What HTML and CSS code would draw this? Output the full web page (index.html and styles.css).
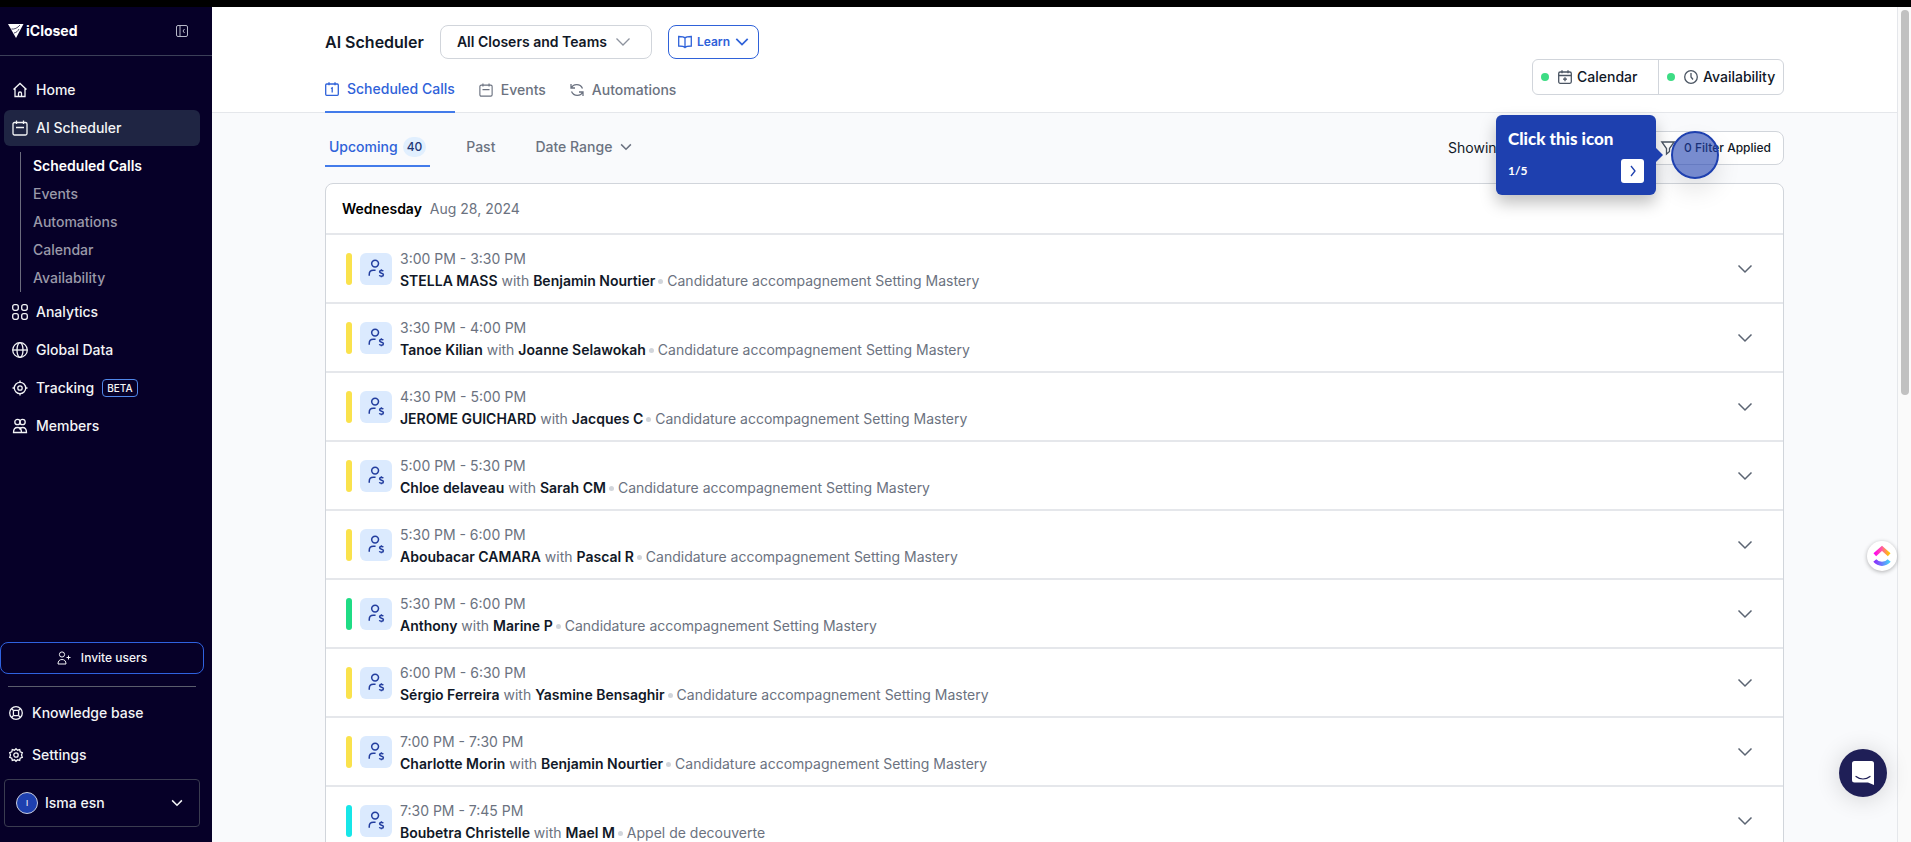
FILE: index.html
```html
<!DOCTYPE html>
<html lang="en">
<head>
    <meta charset="UTF-8">
    <meta name="viewport" content="width=device-width, initial-scale=1.0">
    <title>iClosed - AI Scheduler</title>
    <link rel="stylesheet" href="styles.css">
</head>
<body>
    <!-- shared icons -->
    <svg class="sprite" xmlns="http://www.w3.org/2000/svg">
        <symbol id="i-chevron" viewBox="0 0 16 16"><path d="M1.500 4.500L8 11l6.500-6.500"/></symbol>
        <symbol id="i-calendar" viewBox="0 0 16 16"><rect x="1" y="2.500" width="14" height="12.500" rx="1.500"/><path d="M4.500 .5v3.500M11.500 .5v3.500M4 7.500h8"/></symbol>
        <symbol id="i-caller" viewBox="0 0 20 22"><circle cx="9" cy="5" r="3.800"/><path d="M2.500 18.500v-1.500c0-3 2-4.500 4.500-4.500h2.500"/><path d="M18 13.500c-.5-1.200-4-1.400-4 .6 0 2.200 4.200 1 4.200 3.200s-3.900 2-4.400.5M16 11.300v1.300M16 18.800v1.300"/></symbol>
    </svg>

    <div class="topbar"></div>
    <div class="app">
        <aside class="sidebar">
            <div class="brand">
                <svg class="brand-mark" viewBox="0 0 16 14"><path d="M0 0h15.500L8 14z" fill="#fff"/><path d="M3.500 5c3 .5 6-1 8.500-4M6 9c2.500-.5 4-2 5-4" stroke="#060028" stroke-width=".7"/></svg>
                <span class="brand-name">iClosed</span>
                <button class="collapse" aria-label="Collapse sidebar">
                    <svg viewBox="0 0 12 12"><rect x=".5" y=".5" width="11" height="11" rx="1.500"/><path d="M4 .5v11M8.500 4L7 6l1.500 2"/></svg>
                </button>
            </div>

            <nav class="menu">
                <a href="#" class="menu-item">
                    <svg viewBox="0 0 16 16"><path d="M1.500 7.500L8 1.500l6.500 6M3 6.500v8h10v-8M6.500 14.500v-3a1.500 1.500 0 0 1 3 0v3"/></svg>
                    Home
                </a>
                <a href="#" class="menu-item active">
                    <svg><use href="#i-calendar"/></svg>
                    AI Scheduler
                </a>
                <div class="submenu">
                    <a href="#" class="current">Scheduled Calls</a>
                    <a href="#">Events</a>
                    <a href="#">Automations</a>
                    <a href="#">Calendar</a>
                    <a href="#">Availability</a>
                </div>
                <a href="#" class="menu-item">
                    <svg viewBox="0 0 16 16"><rect x=".7" y=".7" width="5.600" height="5.600" rx="2"/><rect x="9.700" y=".7" width="5.600" height="5.600" rx="2"/><rect x=".7" y="9.700" width="5.600" height="5.600" rx="2"/><rect x="9.700" y="9.700" width="5.600" height="5.600" rx="2"/></svg>
                    Analytics
                </a>
                <a href="#" class="menu-item">
                    <svg viewBox="0 0 16 16"><circle cx="8" cy="8" r="7.300"/><ellipse cx="8" cy="8" rx="3" ry="7.300"/><path d="M.7 8h14.600"/></svg>
                    Global Data
                </a>
                <a href="#" class="menu-item">
                    <svg viewBox="0 0 16 16"><circle cx="8" cy="8" r="5.700"/><circle cx="8" cy="8" r="2.200"/><path d="M8 .5v2M8 13.500v2M.5 8h2M13.500 8h2"/></svg>
                    Tracking
                    <span class="beta">BETA</span>
                </a>
                <a href="#" class="menu-item">
                    <svg viewBox="0 0 16 16"><circle cx="5.500" cy="4" r="2.700"/><circle cx="10.500" cy="4" r="2.700"/><path d="M1.500 14.500c0-3.500 2-5 4-5s4 1.500 4 5zM9.500 14.500h5c0-3.500-2-5-4-5-1.500 0-2.500 1-3 2"/></svg>
                    Members
                </a>
            </nav>

            <div class="sidebar-bottom">
                <button class="invite">
                    <svg viewBox="0 0 14 14"><circle cx="5" cy="3.500" r="2.600"/><path d="M1 13c0-3 1.500-4.500 4-4.500S9 10 9 13zM11.500 4.500v4M9.500 6.500h4"/></svg>
                    Invite users
                </button>
                <div class="divider"></div>
                <a href="#" class="bottom-item">
                    <svg viewBox="0 0 14 14"><circle cx="7" cy="7" r="6.300"/><rect x="4.400" y="4.400" width="5.200" height="5.200" rx="1"/><path d="M2.500 2.500l2 2M11.500 2.500l-2 2M2.500 11.500l2-2M11.500 11.500l-2-2"/></svg>
                    Knowledge base
                </a>
                <a href="#" class="bottom-item">
                    <svg viewBox="0 0 14 14"><path d="M7 .7l1.500 1.500 2.200-.6.500 2.200 2.100.8-.8 2.400.8 2.400-2.100.8-.5 2.200-2.200-.6L7 13.300l-1.500-1.500-2.200.6-.5-2.200-2.100-.8L1.500 7 .7 4.600l2.100-.8.500-2.200 2.200.6z"/><circle cx="7" cy="7" r="2.200"/></svg>
                    Settings
                </a>
                <button class="account">
                    <span class="avatar">I</span>
                    Isma esn
                    <svg class="account-chevron"><use href="#i-chevron"/></svg>
                </button>
            </div>
        </aside>

        <main class="main">
            <header class="header">
                <div class="wrap">
                    <div class="title-row">
                        <h1>AI Scheduler</h1>
                        <button class="team-select">All Closers and Teams <svg><use href="#i-chevron"/></svg></button>
                        <button class="learn">
                            <svg viewBox="0 0 14 14"><path d="M7 3C6 1.700 4 1.500.7 1.500v9.500C4 11 6 11.200 7 12.500c1-1.300 3-1.500 6.300-1.500V1.500C10 1.500 8 1.700 7 3zM7 3v9.500"/></svg>
                            Learn
                            <svg class="learn-chevron"><use href="#i-chevron"/></svg>
                        </button>
                    </div>
                    <div class="tabs-row">
                        <nav class="tabs">
                            <a href="#" class="tab active">
                                <svg viewBox="0 0 14 14"><rect x=".7" y="2" width="12.600" height="11.300" rx="1"/><path d="M4 .3v3M10 .3v3M6 6.500l1.200-.7v4.700"/></svg>
                                Scheduled Calls
                            </a>
                            <a href="#" class="tab">
                                <svg><use href="#i-calendar"/></svg>
                                Events
                            </a>
                            <a href="#" class="tab">
                                <svg viewBox="0 0 14 14"><path d="M1 1v4h4M1.300 5C3 1 10 0 12.500 5.500M13 13V9H9M12.700 9C11 13 4 14 1.500 8.500"/></svg>
                                Automations
                            </a>
                        </nav>
                        <div class="shortcuts">
                            <button><span class="dot"></span><svg viewBox="0 0 14 14"><rect x=".7" y="2" width="12.600" height="11.300" rx="1.500"/><path d="M4 .3v3M10 .3v3M.7 5.500h12.600M7 7.200v4M5 9.200h4"/></svg>Calendar</button>
                            <button><span class="dot"></span><svg viewBox="0 0 14 14"><circle cx="7" cy="7" r="6.300"/><path d="M7 3v4l2 2.500"/></svg>Availability</button>
                        </div>
                    </div>
                </div>
            </header>

            <div class="wrap">
                <div class="filters">
                    <nav class="ranges">
                        <a href="#" class="range active">Upcoming <span class="count">40</span></a>
                        <a href="#" class="range">Past</a>
                        <a href="#" class="range">Date Range <svg><use href="#i-chevron"/></svg></a>
                    </nav>
                    <div class="filter-side">
                        <span class="showing">Showing</span>
                        <button class="filter-btn">
                            <svg viewBox="0 0 14 14"><path d="M.8 1h12.400L8.500 7.500v3L5.500 13V7.500z"/></svg>
                            0 Filter Applied
                        </button>
                        <div class="tour">
                            <strong class="tour-title">Click this icon</strong>
                            <div class="tour-foot">
                                <span>1/5</span>
                                <button aria-label="Next step"><svg viewBox="0 0 16 16"><path d="M6 3l4 5-4 5"/></svg></button>
                            </div>
                        </div>
                        <div class="hotspot"></div>
                    </div>
                </div>

                <section class="calls">
                    <div class="day"><strong>Wednesday</strong> Aug 28, 2024</div>

                    <div class="call">
                        <span class="bar yellow"></span>
                        <span class="call-icon"><svg><use href="#i-caller"/></svg></span>
                        <div class="call-text">
                            <div>3:00 PM - 3:30 PM</div>
                            <div><b>STELLA MASS</b> with <b>Benjamin Nourtier</b><i class="sep"></i>Candidature accompagnement Setting Mastery</div>
                        </div>
                        <button class="expand" aria-label="Show details"><svg><use href="#i-chevron"/></svg></button>
                    </div>
                    <div class="call">
                        <span class="bar yellow"></span>
                        <span class="call-icon"><svg><use href="#i-caller"/></svg></span>
                        <div class="call-text">
                            <div>3:30 PM - 4:00 PM</div>
                            <div><b>Tanoe Kilian</b> with <b>Joanne Selawokah</b><i class="sep"></i>Candidature accompagnement Setting Mastery</div>
                        </div>
                        <button class="expand" aria-label="Show details"><svg><use href="#i-chevron"/></svg></button>
                    </div>
                    <div class="call">
                        <span class="bar yellow"></span>
                        <span class="call-icon"><svg><use href="#i-caller"/></svg></span>
                        <div class="call-text">
                            <div>4:30 PM - 5:00 PM</div>
                            <div><b>JEROME GUICHARD</b> with <b>Jacques C</b><i class="sep"></i>Candidature accompagnement Setting Mastery</div>
                        </div>
                        <button class="expand" aria-label="Show details"><svg><use href="#i-chevron"/></svg></button>
                    </div>
                    <div class="call">
                        <span class="bar yellow"></span>
                        <span class="call-icon"><svg><use href="#i-caller"/></svg></span>
                        <div class="call-text">
                            <div>5:00 PM - 5:30 PM</div>
                            <div><b>Chloe delaveau</b> with <b>Sarah CM</b><i class="sep"></i>Candidature accompagnement Setting Mastery</div>
                        </div>
                        <button class="expand" aria-label="Show details"><svg><use href="#i-chevron"/></svg></button>
                    </div>
                    <div class="call">
                        <span class="bar yellow"></span>
                        <span class="call-icon"><svg><use href="#i-caller"/></svg></span>
                        <div class="call-text">
                            <div>5:30 PM - 6:00 PM</div>
                            <div><b>Aboubacar CAMARA</b> with <b>Pascal R</b><i class="sep"></i>Candidature accompagnement Setting Mastery</div>
                        </div>
                        <button class="expand" aria-label="Show details"><svg><use href="#i-chevron"/></svg></button>
                    </div>
                    <div class="call">
                        <span class="bar green"></span>
                        <span class="call-icon"><svg><use href="#i-caller"/></svg></span>
                        <div class="call-text">
                            <div>5:30 PM - 6:00 PM</div>
                            <div><b>Anthony</b> with <b>Marine P</b><i class="sep"></i>Candidature accompagnement Setting Mastery</div>
                        </div>
                        <button class="expand" aria-label="Show details"><svg><use href="#i-chevron"/></svg></button>
                    </div>
                    <div class="call">
                        <span class="bar yellow"></span>
                        <span class="call-icon"><svg><use href="#i-caller"/></svg></span>
                        <div class="call-text">
                            <div>6:00 PM - 6:30 PM</div>
                            <div><b>Sérgio Ferreira</b> with <b>Yasmine Bensaghir</b><i class="sep"></i>Candidature accompagnement Setting Mastery</div>
                        </div>
                        <button class="expand" aria-label="Show details"><svg><use href="#i-chevron"/></svg></button>
                    </div>
                    <div class="call">
                        <span class="bar yellow"></span>
                        <span class="call-icon"><svg><use href="#i-caller"/></svg></span>
                        <div class="call-text">
                            <div>7:00 PM - 7:30 PM</div>
                            <div><b>Charlotte Morin</b> with <b>Benjamin Nourtier</b><i class="sep"></i>Candidature accompagnement Setting Mastery</div>
                        </div>
                        <button class="expand" aria-label="Show details"><svg><use href="#i-chevron"/></svg></button>
                    </div>
                    <div class="call">
                        <span class="bar cyan"></span>
                        <span class="call-icon"><svg><use href="#i-caller"/></svg></span>
                        <div class="call-text">
                            <div>7:30 PM - 7:45 PM</div>
                            <div><b>Boubetra Christelle</b> with <b>Mael M</b><i class="sep"></i>Appel de decouverte</div>
                        </div>
                        <button class="expand" aria-label="Show details"><svg><use href="#i-chevron"/></svg></button>
                    </div>
                </section>
            </div>
        </main>
        <div class="scrollbar"><div class="thumb"></div></div>
    </div>

    <button class="clickup" aria-label="ClickUp">
        <svg viewBox="0 0 20 24">
            <defs>
                <linearGradient id="cu-top"><stop offset="0" stop-color="#ff02f0"/><stop offset=".5" stop-color="#ff5f9e"/><stop offset="1" stop-color="#ffc800"/></linearGradient>
                <linearGradient id="cu-bottom"><stop offset="0" stop-color="#8930fd"/><stop offset="1" stop-color="#49ccf9"/></linearGradient>
            </defs>
            <path d="M2 10.500L10 3.500l8 7" stroke="url(#cu-top)" stroke-width="4.500"/>
            <path d="M2 17c4.500 5 11.500 5 16 0" stroke="url(#cu-bottom)" stroke-width="4.500"/>
        </svg>
    </button>
    <button class="chat" aria-label="Open chat">
        <svg viewBox="0 0 22 24"><path d="M2.500 0h17A2.500 2.500 0 0 1 22 2.500V24l-6-2.500H2.500A2.500 2.500 0 0 1 0 19V2.500A2.500 2.500 0 0 1 2.500 0z" fill="#fff"/><path d="M4 15.500c4 3.300 10 3.300 14 0" stroke="#1f1f57" stroke-width="1.200" stroke-linecap="round"/></svg>
    </button>
</body>
</html>
```
FILE: styles.css
```css
* {
    box-sizing: border-box;
}
body {
    margin: 0;
    height: 100vh;
    display: flex;
    flex-direction: column;
    overflow: hidden;
    font-family: Inter, "Liberation Sans", sans-serif;
    font-size: 14px;
    line-height: 20px;
    color: #111827;
    background: #f9fafc;
}
a {
    color: inherit;
    text-decoration: none;
}
button {
    font: inherit;
    color: inherit;
    background: none;
    border: none;
    padding: 0;
    cursor: pointer;
}
svg {
    width: 16px;
    height: 16px;
    flex: none;
    fill: none;
    stroke: currentColor;
    stroke-width: 1.3;
    overflow: visible;
}
.sprite {
    position: absolute;
    width: 0;
    height: 0;
}
.topbar {
    height: 7px;
    flex: none;
    background: #000;
}
.app {
    flex: 1;
    min-height: 0;
    display: flex;
}

/* sidebar */
.sidebar {
    width: 212px;
    flex: none;
    display: flex;
    flex-direction: column;
    background: #060028;
    color: #f3f4f6;
    font-weight: 500;
}
.brand {
    height: 49px;
    flex: none;
    display: flex;
    align-items: center;
    padding: 0 24px 0 8px;
    border-bottom: 1px solid #3b3f58;
}
.brand-mark {
    height: 14px;
    stroke: none;
}
.brand-name {
    margin-left: 2px;
    font-size: 14px;
    font-weight: 700;
    color: #fff;
}
.collapse {
    display: flex;
    margin-left: auto;
    color: #b6b8c8;
}
.collapse svg {
    width: 12px;
    height: 12px;
    stroke-width: 1;
}
.menu {
    padding: 14px 12px 0 4px;
}
.menu-item {
    display: flex;
    align-items: center;
    gap: 8px;
    height: 36px;
    margin: 2px 0;
    padding-left: 8px;
    border-radius: 6px;
}
.menu-item.active {
    background: #1f2543;
}
.submenu {
    margin: 6px 0 0 16px;
    padding-left: 12px;
    border-left: 1px solid #6b6b7d;
}
.submenu a {
    display: block;
    line-height: 28px;
    color: #9a99a9;
}
.submenu a.current {
    color: #fff;
    font-weight: 600;
}
.beta {
    padding: 0 4px;
    border: 1px solid #5087e8;
    border-radius: 4px;
    font-size: 10px;
    line-height: 16px;
}
.sidebar-bottom {
    margin-top: auto;
    padding: 0 8px 15px 0;
}
.invite {
    display: flex;
    align-items: center;
    justify-content: center;
    gap: 10px;
    width: 100%;
    height: 32px;
    border: 1px solid #2f62e0;
    border-radius: 8px;
    font-size: 12px;
}
.invite svg {
    width: 14px;
    height: 14px;
    stroke-width: 1;
}
.divider {
    height: 1px;
    margin: 12px 8px 5px;
    background: #5a5d6c;
}
.bottom-item {
    display: flex;
    align-items: center;
    gap: 9px;
    height: 42px;
    padding-left: 9px;
}
.bottom-item svg {
    width: 14px;
    height: 14px;
}
.account {
    display: flex;
    align-items: center;
    gap: 7px;
    width: 196px;
    height: 48px;
    margin: 3px 0 0 4px;
    padding: 0 16px 0 11px;
    border: 1px solid #3a3c50;
    border-radius: 4px;
}
.avatar {
    width: 22px;
    height: 22px;
    border: 1px solid #c9cde0;
    border-radius: 50%;
    background: #1e40af;
    font-size: 8px;
    line-height: 20px;
}
.account-chevron {
    width: 12px;
    height: 12px;
    margin-left: auto;
    stroke-width: 2;
}

/* main column */
.main {
    flex: 1;
    min-width: 0;
    overflow: hidden;
}
.wrap {
    padding: 0 113px;
}
.header {
    background: #fff;
    border-bottom: 1px solid #e5e7eb;
}
.title-row {
    display: flex;
    align-items: center;
    gap: 16px;
    padding-top: 18px;
}
h1 {
    margin: 0;
    font-size: 16px;
    font-weight: 600;
}
.team-select {
    display: flex;
    align-items: center;
    gap: 8px;
    height: 34px;
    padding: 0 20px 0 16px;
    border: 1px solid #d1d5db;
    border-radius: 8px;
    font-weight: 600;
}
.team-select svg {
    color: #8d939e;
}
.learn {
    display: flex;
    align-items: center;
    gap: 5px;
    height: 34px;
    padding: 0 9px;
    border: 1px solid #2f62d9;
    border-radius: 8px;
    font-size: 12px;
    font-weight: 600;
    color: #2f62d9;
}
.learn svg {
    width: 14px;
    height: 14px;
}
.learn .learn-chevron {
    stroke-width: 2;
}
.tabs-row {
    display: flex;
    justify-content: space-between;
}
.tabs {
    display: flex;
    gap: 24px;
    height: 54px;
    margin-bottom: -1px;
}
.tab {
    display: flex;
    align-items: center;
    gap: 8px;
    padding-top: 8px;
    font-weight: 500;
    color: #6b7280;
}
.tab svg {
    width: 14px;
    height: 14px;
}
.tab.active {
    color: #2f62d9;
    border-bottom: 2px solid #437bea;
}
.shortcuts {
    display: flex;
    height: 36px;
    border: 1px solid #d1d5db;
    border-radius: 6px;
    font-weight: 500;
}
.shortcuts button {
    display: flex;
    align-items: center;
    width: 125px;
    padding-left: 8px;
}
.shortcuts button + button {
    border-left: 1px solid #d1d5db;
}
.shortcuts svg {
    width: 14px;
    height: 14px;
    margin: 0 5px 0 9px;
    color: #4b5563;
}
.dot {
    width: 8px;
    height: 8px;
    border-radius: 50%;
    background: #3ddc84;
}

/* filters */
.filters {
    display: flex;
    justify-content: space-between;
    padding: 18px 0 16px;
}
.ranges {
    display: flex;
    gap: 32px;
    font-weight: 500;
    color: #6b7280;
}
.range {
    display: flex;
    align-items: center;
    gap: 5px;
    height: 36px;
    padding: 0 4px 4px;
}
.range.active {
    color: #2f62d9;
    border-bottom: 2px solid #437bea;
    padding-bottom: 2px;
}
.range svg {
    width: 12px;
    height: 12px;
    margin-left: 3px;
    stroke-width: 2;
}
.count {
    padding: 0 4px;
    border-radius: 10px;
    background: #e1effe;
    color: #233876;
    font-size: 12px;
}
.filter-side {
    position: relative;
    display: flex;
    align-items: center;
    gap: 16px;
    height: 34px;
}
.showing {
    min-width: 180px;
}
.filter-btn {
    display: flex;
    align-items: center;
    gap: 9px;
    height: 34px;
    padding: 0 12px 0 16px;
    border: 1px solid #d1d5db;
    border-radius: 8px;
    background: #fff;
    font-size: 12px;
    font-weight: 500;
}
.filter-btn svg {
    width: 14px;
    height: 14px;
    color: #4b5563;
}
.tour {
    position: absolute;
    z-index: 2;
    top: -16px;
    right: 128px;
    width: 160px;
    height: 80px;
    padding: 14px 12px 12px;
    border-radius: 6px;
    background: #1e40af;
    color: #fff;
    font-family: Lato, sans-serif;
    font-weight: 700;
    box-shadow: 0 8px 16px rgba(0, 0, 0, .25);
}
.tour::after {
    content: "";
    position: absolute;
    top: 33px;
    right: -7px;
    border: 7px solid transparent;
    border-left-color: #1e40af;
    border-right: 0;
}
.tour-title {
    display: block;
    font-size: 17px;
}
.tour-foot {
    display: flex;
    align-items: center;
    justify-content: space-between;
    margin-top: 10px;
    font-size: 12px;
}
.tour-foot button {
    display: flex;
    align-items: center;
    justify-content: center;
    width: 23px;
    height: 24px;
    border-radius: 3px;
    background: #fff;
    color: #1e40af;
}
.hotspot {
    position: absolute;
    top: 0;
    right: 65px;
    width: 48px;
    height: 48px;
    border: 2px solid #1e40af;
    border-radius: 50%;
    background: rgba(30, 64, 175, .6);
    box-shadow: 0 12px 24px rgba(0, 0, 0, .1);
}

/* calls list */
.calls {
    border: 1px solid #d1d5db;
    border-radius: 8px;
    background: #fff;
    color: #6b7280;
}
.day {
    padding: 15px 16px 14px;
}
.day strong {
    margin-right: 4px;
    font-weight: 600;
    color: #000;
}
.call {
    display: flex;
    align-items: center;
    height: 69px;
    padding: 0 30px 0 20px;
    border-top: 2px solid #e5e7eb;
}
.bar {
    width: 6px;
    height: 32px;
    border-radius: 3px;
}
.yellow {
    background: #fae24c;
}
.green {
    background: #1fdc85;
}
.cyan {
    background: #17e6e8;
}
.call-icon {
    display: flex;
    align-items: center;
    justify-content: center;
    width: 32px;
    height: 32px;
    margin: 0 8px;
    border-radius: 6px;
    background: #dbeafe;
    color: #233e9f;
}
.call-icon svg {
    width: 18px;
    height: 20px;
    stroke-width: 1.7;
}
.call-text {
    padding-top: 2px;
    line-height: 22px;
}
.call-text b {
    font-weight: 600;
    color: #111827;
}
.sep {
    display: inline-block;
    width: 5px;
    height: 5px;
    margin: 0 4px 0 3px;
    border-radius: 50%;
    background: #d1d5db;
    vertical-align: middle;
}
.expand {
    display: flex;
    margin-left: auto;
    color: #5b6472;
}
.expand svg {
    stroke-width: 1.5;
}

/* scrollbar and floating buttons */
.scrollbar {
    width: 14px;
    flex: none;
    padding: 0 2px 0 3px;
    border-left: 1px solid #e5e7eb;
    background: #fafafa;
}
.thumb {
    width: 8px;
    height: 385px;
    margin-top: 3px;
    border-radius: 4px;
    background: #c1c1c1;
}
.clickup {
    position: fixed;
    right: 14px;
    bottom: 271px;
    display: flex;
    align-items: center;
    justify-content: center;
    width: 30px;
    height: 30px;
    border-radius: 50%;
    background: #fff;
    box-shadow: 0 1px 4px rgba(0, 0, 0, .3);
}
.clickup svg {
    width: 18px;
    height: 22px;
}
.chat {
    position: fixed;
    right: 24px;
    bottom: 45px;
    display: flex;
    align-items: center;
    justify-content: center;
    width: 48px;
    height: 48px;
    border-radius: 50%;
    background: #1f1f57;
    box-shadow: 0 2px 24px rgba(0, 0, 0, .16);
}
.chat svg {
    width: 22px;
    height: 24px;
    stroke: none;
}
```
